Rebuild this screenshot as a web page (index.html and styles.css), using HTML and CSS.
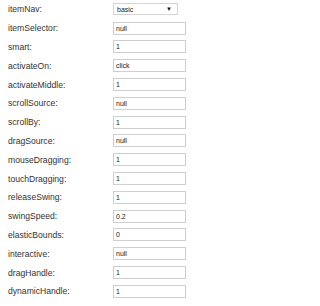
FILE: index.html
```html
<!DOCTYPE html>
<html>
<head>
<meta charset="utf-8">
<link rel="stylesheet" href="styles.css">
</head>
<body>
<div class="form">
  <div class="row"><span class="label">itemNav:</span><div class="select"><span>basic</span><span class="arrow">▼</span></div></div>
  <div class="row"><span class="label">itemSelector:</span><input class="field" type="text" value="null"></div>
  <div class="row"><span class="label">smart:</span><input class="field" type="text" value="1"></div>
  <div class="row"><span class="label">activateOn:</span><input class="field" type="text" value="click"></div>
  <div class="row"><span class="label">activateMiddle:</span><input class="field" type="text" value="1"></div>
  <div class="row"><span class="label">scrollSource:</span><input class="field" type="text" value="null"></div>
  <div class="row"><span class="label">scrollBy:</span><input class="field" type="text" value="1"></div>
  <div class="row"><span class="label">dragSource:</span><input class="field" type="text" value="null"></div>
  <div class="row"><span class="label">mouseDragging:</span><input class="field" type="text" value="1"></div>
  <div class="row"><span class="label">touchDragging:</span><input class="field" type="text" value="1"></div>
  <div class="row"><span class="label">releaseSwing:</span><input class="field" type="text" value="1"></div>
  <div class="row"><span class="label">swingSpeed:</span><input class="field" type="text" value="0.2"></div>
  <div class="row"><span class="label">elasticBounds:</span><input class="field" type="text" value="0"></div>
  <div class="row"><span class="label">interactive:</span><input class="field" type="text" value="null"></div>
  <div class="row"><span class="label">dragHandle:</span><input class="field" type="text" value="1"></div>
  <div class="row"><span class="label">dynamicHandle:</span><input class="field" type="text" value="1"></div>
</div>
</body>
</html>
```
FILE: styles.css
```css
html, body {
  margin: 0;
  padding: 0;
  background: #fff;
}
body {
  font-family: "Liberation Sans", Arial, sans-serif;
}
.form {
  display: flex;
  flex-direction: column;
  padding-left: 8px;
}
.row {
  height: 18.8px;
  display: flex;
  align-items: center;
}
.label {
  width: 105px;
  flex: none;
  font-size: 8.6px;
  color: #333;
}
.field {
  box-sizing: border-box;
  width: 73px;
  height: 13px;
  margin: 0;
  padding: 0 2px;
  border: 1px solid #cfcfcf;
  border-radius: 0;
  font-family: "Liberation Sans", Arial, sans-serif;
  font-size: 7px;
  color: #222;
  background: #fff;
  outline: none;
}
.select {
  box-sizing: border-box;
  width: 65px;
  height: 12px;
  border: 1px solid #d4d4d4;
  background: #fff;
  display: flex;
  align-items: center;
  justify-content: space-between;
  padding: 0 5px 0 3px;
  font-size: 7px;
  color: #222;
}
.arrow {
  font-size: 6px;
  color: #111;
}
```
